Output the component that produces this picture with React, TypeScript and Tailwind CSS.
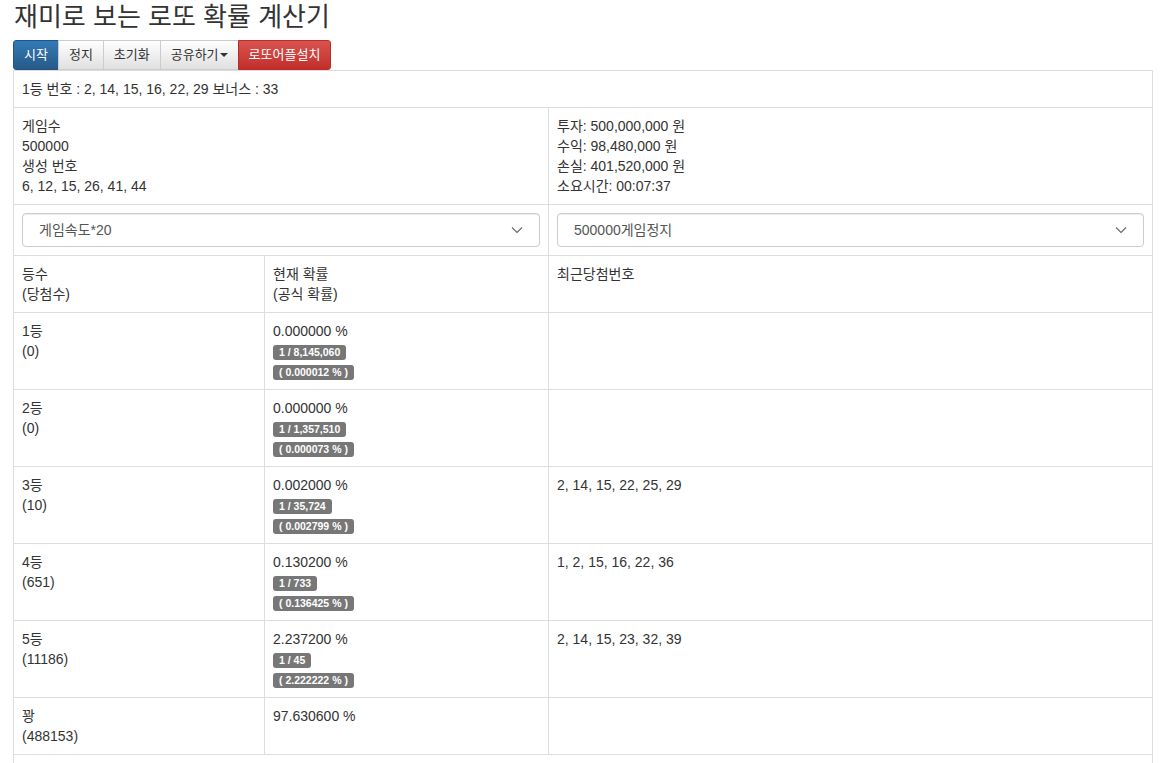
import React from 'react';

type Rank = {
  name: string;
  count: string;
  rate: string;
  odds?: string;
  official?: string;
  recent?: string;
};

const ranks: Rank[] = [
  { name: '1등', count: '(0)', rate: '0.000000 %', odds: '1 / 8,145,060', official: '( 0.000012 % )' },
  { name: '2등', count: '(0)', rate: '0.000000 %', odds: '1 / 1,357,510', official: '( 0.000073 % )' },
  { name: '3등', count: '(10)', rate: '0.002000 %', odds: '1 / 35,724', official: '( 0.002799 % )', recent: '2, 14, 15, 22, 25, 29' },
  { name: '4등', count: '(651)', rate: '0.130200 %', odds: '1 / 733', official: '( 0.136425 % )', recent: '1, 2, 15, 16, 22, 36' },
  { name: '5등', count: '(11186)', rate: '2.237200 %', odds: '1 / 45', official: '( 2.222222 % )', recent: '2, 14, 15, 23, 32, 39' },
  { name: '꽝', count: '(488153)', rate: '97.630600 %' },
];

const Label = ({ children }: { children: React.ReactNode }) => (
  <div className="leading-5">
    <span className="inline-block rounded-[3px] bg-[#777] px-[6px] pt-[2px] pb-[3px] align-middle text-[10.5px] font-bold leading-none text-white">
      {children}
    </span>
  </div>
);

const Select = ({ value }: { value: string }) => (
  <div className="flex h-[34px] items-center justify-between rounded-[4px] border border-[#ccc] bg-white pl-4 pr-4 text-[14px] text-[#555] shadow-[inset_0_1px_1px_rgba(0,0,0,0.075)]">
    <span>{value}</span>
    <svg className="h-[8px] w-[12px]" viewBox="0 0 12 8" fill="none" stroke="#666" strokeWidth="1.1">
      <path d="M1 1.5l5 5 5-5" />
    </svg>
  </div>
);

const td = 'border border-[#ddd] p-2 align-top';

export default function App() {
  return (
    <div
      className="min-h-screen bg-white text-[14px] leading-5 text-[#333]"
      style={{ fontFamily: '"Liberation Sans", "Noto Sans CJK KR", sans-serif' }}
    >
      <h1 className="ml-[14px] pt-[3px] pb-[8px] text-[26px] leading-[29px] font-normal">
        재미로 보는 로또 확률 계산기
      </h1>

      {/* button group */}
      <div className="ml-[13px] flex text-[13px] leading-[18px]">
        <button className="h-[30px] rounded-l-[3px] border border-[#245580] bg-gradient-to-b from-[#337ab7] to-[#265a88] px-[10px] text-white">
          시작
        </button>
        <button className="-ml-px h-[30px] border border-[#ccc] bg-gradient-to-b from-white to-[#e0e0e0] px-[10px] text-[#333]">
          정지
        </button>
        <button className="-ml-px h-[30px] border border-[#ccc] bg-gradient-to-b from-white to-[#e0e0e0] px-[10px] text-[#333]">
          초기화
        </button>
        <button className="-ml-px flex h-[30px] items-center border border-[#ccc] bg-gradient-to-b from-white to-[#e0e0e0] px-[10px] text-[#333]">
          공유하기
          <span className="ml-[1px] inline-block h-0 w-0 border-x-[4px] border-t-[4px] border-x-transparent border-t-[#333]" />
        </button>
        <button className="-ml-px h-[30px] rounded-r-[3px] border border-[#b92c28] bg-gradient-to-b from-[#d9534f] to-[#c12e2a] px-[10px] text-white">
          로또어플설치
        </button>
      </div>

      <table className="ml-[13px] w-[1140px] table-fixed border-collapse">
        <colgroup>
          <col className="w-[251px]" />
          <col className="w-[284px]" />
          <col />
        </colgroup>
        <tbody>
          <tr>
            <td className={td} colSpan={3}>
              1등 번호 : 2, 14, 15, 16, 22, 29 보너스 : 33
            </td>
          </tr>
          <tr>
            <td className={td} colSpan={2}>
              <div>게임수</div>
              <div>500000</div>
              <div>생성 번호</div>
              <div>6, 12, 15, 26, 41, 44</div>
            </td>
            <td className={td}>
              <div>투자: 500,000,000 원</div>
              <div>수익: 98,480,000 원</div>
              <div>손실: 401,520,000 원</div>
              <div>소요시간: 00:07:37</div>
            </td>
          </tr>
          <tr>
            <td className={td} colSpan={2}>
              <Select value="게임속도*20" />
            </td>
            <td className={td}>
              <Select value="500000게임정지" />
            </td>
          </tr>
          <tr>
            <td className={td}>
              <div>등수</div>
              <div>(당첨수)</div>
            </td>
            <td className={td}>
              <div>현재 확률</div>
              <div>(공식 확률)</div>
            </td>
            <td className={td}>최근당첨번호</td>
          </tr>
          {ranks.map((r) => (
            <tr key={r.name}>
              <td className={td}>
                <div>{r.name}</div>
                <div>{r.count}</div>
              </td>
              <td className={td}>
                <div>{r.rate}</div>
                {r.odds && <Label>{r.odds}</Label>}
                {r.official && <Label>{r.official}</Label>}
                {!r.odds && <div>&nbsp;</div>}
              </td>
              <td className={td}>{r.recent}</td>
            </tr>
          ))}
          <tr>
            <td className={td} colSpan={3}>
              &nbsp;
            </td>
          </tr>
        </tbody>
      </table>
    </div>
  );
}
